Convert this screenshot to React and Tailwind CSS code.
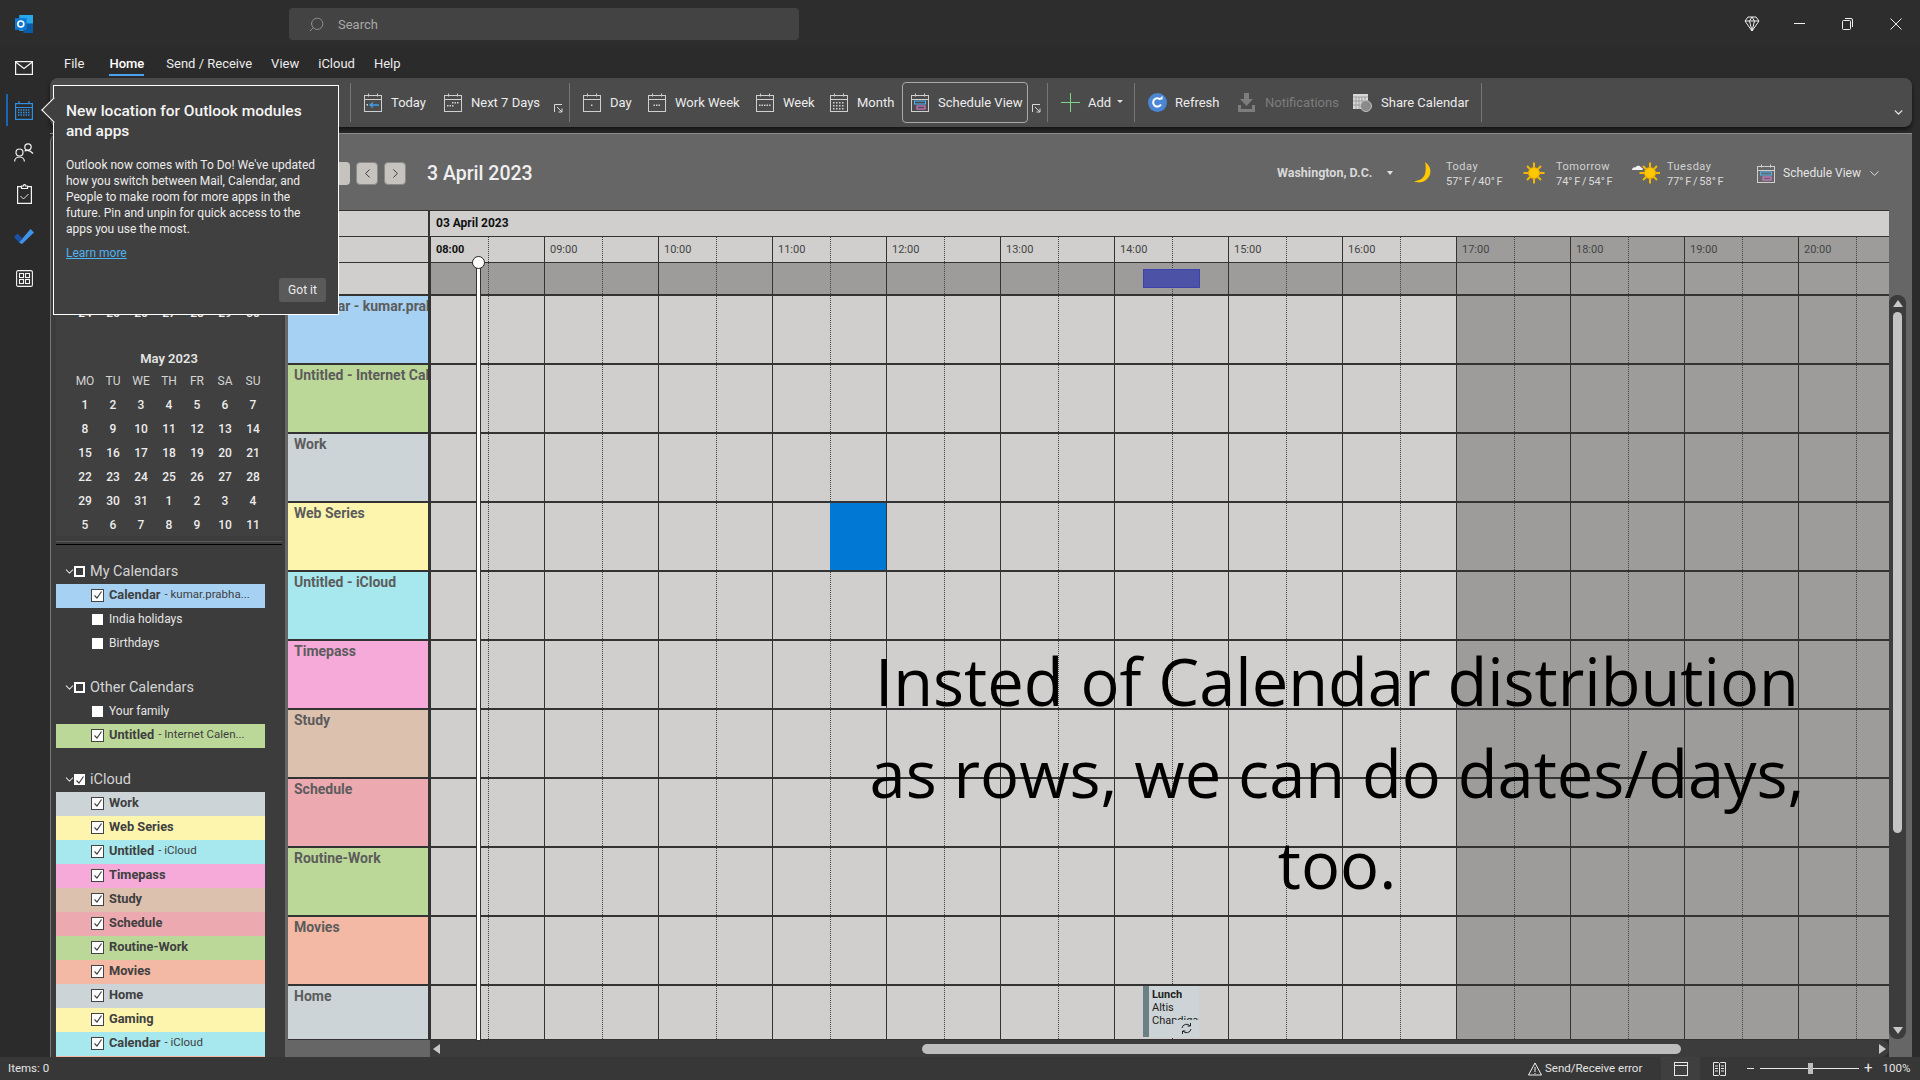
import { ChevronDown, ChevronLeft, ChevronRight, Search } from 'lucide-react';

const HOURS = ['08:00', '09:00', '10:00', '11:00', '12:00', '13:00', '14:00', '15:00', '16:00', '17:00', '18:00', '19:00', '20:00'];

const ROWS = [
  { label: 'Calendar - kumar.prabhakar', color: 'bg-[#a6d1f3]' },
  { label: 'Untitled - Internet Calendar', color: 'bg-[#bcd898]' },
  { label: 'Work', color: 'bg-[#cdd4d7]' },
  { label: 'Web Series', color: 'bg-[#fdf5ae]' },
  { label: 'Untitled - iCloud', color: 'bg-[#a6e8ee]' },
  { label: 'Timepass', color: 'bg-[#f5aad9]' },
  { label: 'Study', color: 'bg-[#dcc1ae]' },
  { label: 'Schedule', color: 'bg-[#eca9b0]' },
  { label: 'Routine-Work', color: 'bg-[#bcd898]' },
  { label: 'Movies', color: 'bg-[#f4b9a5]' },
  { label: 'Home', color: 'bg-[#cdd4d7]' },
];

const ICLOUD = [
  { name: 'Work', color: 'bg-[#cdd4d7]' },
  { name: 'Web Series', color: 'bg-[#fdf5ae]' },
  { name: 'Untitled', sub: 'iCloud', color: 'bg-[#a6e8ee]' },
  { name: 'Timepass', color: 'bg-[#f5aad9]' },
  { name: 'Study', color: 'bg-[#dcc1ae]' },
  { name: 'Schedule', color: 'bg-[#eca9b0]' },
  { name: 'Routine-Work', color: 'bg-[#bcd898]' },
  { name: 'Movies', color: 'bg-[#f4b9a5]' },
  { name: 'Home', color: 'bg-[#cdd4d7]' },
  { name: 'Gaming', color: 'bg-[#fdf5ae]' },
  { name: 'Calendar', sub: 'iCloud', color: 'bg-[#a6e8ee]' },
  { name: 'Tasks', color: 'bg-[#f4b9a5]' },
];

const WEEKDAYS = ['MO', 'TU', 'WE', 'TH', 'FR', 'SA', 'SU'];
const APRIL = [27, 28, 29, 30, 31, 1, 2, 3, 4, 5, 6, 7, 8, 9, 10, 11, 12, 13, 14, 15, 16, 17, 18, 19, 20, 21, 22, 23, 24, 25, 26, 27, 28, 29, 30];
const MAY = [1, 2, 3, 4, 5, 6, 7, 8, 9, 10, 11, 12, 13, 14, 15, 16, 17, 18, 19, 20, 21, 22, 23, 24, 25, 26, 27, 28, 29, 30, 31, 1, 2, 3, 4, 5, 6, 7, 8, 9, 10, 11];

function CalIcon({ children, stroke = '#cfcfcf' }) {
  return (
    <svg width="18" height="19" viewBox="0 0 18 19" fill="none" stroke={stroke} strokeWidth="1" className="shrink-0">
      <rect x="0.5" y="2.5" width="17" height="16" />
      <path d="M0.5 6.5h17M4.5 0.5v3M13.5 0.5v3" />
      {children}
    </svg>
  );
}

function Dots({ cells }) {
  return cells.map(([x, y]) => <rect key={`${x}-${y}`} x={x} y={y} width="1.5" height="1.5" fill="#cfcfcf" stroke="none" />);
}

function Launcher() {
  return (
    <svg width="9" height="9" viewBox="0 0 9 9" fill="none" stroke="#d8d8d8" className="shrink-0 self-end mb-[1px]">
      <path d="M0.5 8V0.5H8M3 3l5 5M8 4.5V8H4.5" />
    </svg>
  );
}

function Separator({ className }) {
  return <div className={`h-[39px] w-px shrink-0 bg-[#777] ${className}`} />;
}

function RibbonItem({ icon, label, className, muted }) {
  return (
    <div className={`flex shrink-0 items-center gap-[9px] whitespace-nowrap text-[13px] ${muted ? 'text-[#7d7d7d]' : 'text-[#ececec]'} ${className}`}>
      {icon}
      <span>{label}</span>
    </div>
  );
}

function ScheduleIcon() {
  return (
    <CalIcon>
      <rect x="3.5" y="8" width="11" height="3" stroke="#4db5f5" />
      <rect x="6" y="13" width="8" height="3" stroke="#e77fe0" />
    </CalIcon>
  );
}

function Ribbon() {
  return (
    <div className="flex h-[49px] items-center rounded-[8px] bg-[#4b4b4b] pl-[300px] pr-[7px] shadow-[0_3px_4px_rgba(0,0,0,0.55)]">
      <Separator />
      <RibbonItem
        className="ml-[13px] w-[62px]"
        label="Today"
        icon={
          <CalIcon>
            <path d="M15 12H6M9 9.5L6 12l3 2.500" stroke="#3f9ee8" strokeWidth="1.300" />
            <rect x="2.500" y="11" width="1.500" height="1.500" fill="#cfcfcf" stroke="none" />
          </CalIcon>
        }
      />
      <RibbonItem
        className="ml-[18px] w-[97px]"
        label="Next 7 Days"
        icon={<CalIcon><Dots cells={[[8, 9], [10.5, 9], [13, 9], [3, 12], [5.5, 12], [8, 12]]} /></CalIcon>}
      />
      <div className="ml-[13px] flex h-[22px] shrink-0"><Launcher /></div>
      <Separator className="ml-[6px]" />
      <RibbonItem className="ml-[13px] w-[49px]" label="Day" icon={<CalIcon><Dots cells={[[8, 11.5]]} /></CalIcon>} />
      <RibbonItem className="ml-[16px] w-[93px]" label="Work Week" icon={<CalIcon><Dots cells={[[5.5, 11.5], [8, 11.5], [10.5, 11.5]]} /></CalIcon>} />
      <RibbonItem className="ml-[15px] w-[59px]" label="Week" icon={<CalIcon><Dots cells={[[3, 11.5], [5.5, 11.5], [8, 11.5], [10.5, 11.5], [13, 11.5]]} /></CalIcon>} />
      <RibbonItem
        className="ml-[15px] w-[65px]"
        label="Month"
        icon={<CalIcon><Dots cells={[[3, 9], [6, 9], [9, 9], [12, 9], [3, 12], [6, 12], [9, 12], [12, 12], [3, 15], [6, 15], [9, 15], [12, 15]]} /></CalIcon>}
      />
      <RibbonItem className="ml-[7px] h-[41px] w-[126px] rounded-[4px] border border-[#a8a8a8] pl-[8px]" label="Schedule View" icon={<ScheduleIcon />} />
      <div className="ml-[4px] flex h-[22px] shrink-0"><Launcher /></div>
      <Separator className="ml-[6px]" />
      <RibbonItem
        className="ml-[13px] w-[57px]"
        label="Add"
        icon={
          <svg width="19" height="19" viewBox="0 0 19 19" stroke="#7fd58c" className="shrink-0 mr-[-1px]">
            <path d="M9.500 0v19M0 9.500h19" />
          </svg>
        }
      />
      <span className="ml-[-1px] mb-[2px] h-0 w-0 shrink-0 border-x-[3px] border-t-[3px] border-x-transparent border-t-[#e0e0e0]" />
      <Separator className="ml-[11px]" />
      <RibbonItem
        className="ml-[13px] w-[71px]"
        label="Refresh"
        icon={
          <svg width="19" height="19" viewBox="0 0 19 19" className="shrink-0 mr-[-1px]">
            <circle cx="9.500" cy="9.500" r="9.500" fill="#4a86d4" />
            <path d="M13 11.500a4.200 4.200 0 1 1-.6-5" fill="none" stroke="#fff" strokeWidth="2" />
            <path d="M10.500 6.500h4V2.800z" fill="#fff" />
          </svg>
        }
      />
      <RibbonItem
        muted
        className="ml-[18px] w-[100px]"
        label="Notifications"
        icon={
          <svg width="19" height="19" viewBox="0 0 19 19" fill="#7d7d7d" className="shrink-0">
            <path d="M7 0h5v6h4l-6.500 7L3 6h4zM1 12h3v4h11v-4h3v7H1z" />
          </svg>
        }
      />
      <RibbonItem
        className="ml-[16px] w-[116px]"
        label="Share Calendar"
        icon={
          <svg width="19" height="19" viewBox="0 0 19 19" className="shrink-0">
            <rect x="0" y="1" width="15" height="15" fill="#d8d8d8" />
            <path d="M0 4h15M3 4v12M6 4v12M9 4v12M12 4v12M0 8h15M0 12h15" stroke="#8a8a8a" strokeWidth="0.700" />
            <circle cx="13" cy="13" r="5.500" fill="#8a8a8a" stroke="#bdbdbd" />
          </svg>
        }
      />
      <Separator className="ml-[12px]" />
      <ChevronDown className="ml-auto mt-[20px] h-[13px] w-[13px] text-[#e8e8e8]" strokeWidth={2.500} />
    </div>
  );
}

function Tooltip() {
  return (
    <div className="absolute left-[53px] top-[85px] h-[230px] w-[286px] border border-white bg-[#404040] pl-[12px] pt-[15px] text-white">
      <div className="absolute left-[-9px] top-[15px] h-[18px] w-[18px] rotate-45 border-b border-l border-white bg-[#404040]" />
      <div className="relative text-[15.500px] font-medium leading-[20px] text-[#f4f4f4]">
        New location for Outlook modules
        <br />
        and apps
      </div>
      <p className="mt-[16px] w-[254px] text-[12px] leading-[16px] text-[#ececec]">
        Outlook now comes with To Do! We've updated how you switch between Mail, Calendar, and People to make room for more apps in the future. Pin and unpin for quick access to the apps you use the most.
      </p>
      <div className="mt-[8px] text-[12px] leading-[16px] text-[#4fb3f0] underline">Learn more</div>
      <div className="absolute bottom-[12px] right-[12px] flex h-[24px] w-[47px] items-center justify-center rounded-[3px] bg-[#5a5a5a] text-[12px] text-[#ececec]">Got it</div>
    </div>
  );
}

function MiniMonth({ title, days }) {
  return (
    <div className="w-[196px] shrink-0 text-[12px] text-[#ececec]">
      <div className="flex h-[20px] items-center justify-center text-[13px] font-semibold text-[#e4e4e4]">{title}</div>
      <div className="grid h-[24px] grid-cols-7 items-center text-center text-[#d4d4d4]">
        {WEEKDAYS.map((day) => <span key={day}>{day}</span>)}
      </div>
      <div className="grid h-[144px] grid-cols-7 content-start text-center font-medium">
        {days.map((day, index) => (
          <span key={index} className="flex h-[24px] items-center justify-center">{day}</span>
        ))}
      </div>
    </div>
  );
}

function CheckMark() {
  return (
    <svg width="10" height="10" viewBox="0 0 10 10" fill="none" stroke="#444" strokeWidth="1.200">
      <path d="M1.500 5.500L4 8l4.500-6.500" />
    </svg>
  );
}

function GroupHeader({ label, checked, className }) {
  return (
    <div className={`flex h-[25px] items-center pl-[7px] ${className}`}>
      <ChevronDown className="h-[13px] w-[13px] text-[#d8d8d8]" strokeWidth={2} />
      {checked ? (
        <span className="ml-[-2px] flex h-[11px] w-[11px] items-center justify-center bg-white">
          <CheckMark />
        </span>
      ) : (
        <span className="ml-[-2px] h-[11px] w-[11px] border-2 border-white" />
      )}
      <span className="ml-[5px] text-[14.500px] text-[#d4d4d4]">{label}</span>
    </div>
  );
}

function CalendarRow({ name, sub, color }) {
  if (!color) {
    return (
      <div className="flex h-[24px] w-[209px] items-center pb-[2px] pl-[36px] text-[12px] text-[#e4e4e4]">
        <span className="h-[11px] w-[11px] shrink-0 bg-white" />
        <span className="ml-[6px]">{name}</span>
      </div>
    );
  }

  return (
    <div className={`flex h-[24px] w-[209px] items-center pb-[2px] pl-[35px] text-[12.800px] text-[#404040] ${color}`}>
      <span className="flex h-[13px] w-[13px] shrink-0 items-center justify-center border border-[#444] bg-white">
        <CheckMark />
      </span>
      <span className="ml-[5px] whitespace-nowrap font-bold">{name}</span>
      {sub && <span className="ml-[4px] whitespace-nowrap text-[11.500px]">- {sub}</span>}
    </div>
  );
}

function Sidebar() {
  return (
    <div className="flex w-[238px] shrink-0 overflow-hidden rounded-tl-[8px] border-l border-[#777] bg-[#3c3c3c]">
      <div className="h-full w-[234px] pl-[5px]">
        <div className="flex h-[402px] w-[226px] flex-col items-center overflow-hidden bg-[#404040] pt-[27px]">
          <MiniMonth title="April 2023" days={APRIL} />
          <MiniMonth title="May 2023" days={MAY} />
        </div>
        <div className="mt-[5px] h-[4px] w-[226px] border-y border-t-[#5a5a5a] border-b-black" />
        <GroupHeader label="My Calendars" className="mt-[14px]" />
        <CalendarRow name="Calendar" sub="kumar.prabha..." color="bg-[#a6d1f3]" />
        <CalendarRow name="India holidays" />
        <CalendarRow name="Birthdays" />
        <GroupHeader label="Other Calendars" className="mt-[19px]" />
        <CalendarRow name="Your family" />
        <CalendarRow name="Untitled" sub="Internet Calen..." color="bg-[#bcd898]" />
        <GroupHeader checked label="iCloud" className="mt-[19px]" />
        {ICLOUD.map((item) => <CalendarRow key={item.name} {...item} />)}
      </div>
      <div className="h-full flex-1 bg-[#666]" />
    </div>
  );
}

function Sun({ cloud }) {
  return (
    <svg width="28" height="24" viewBox="0 0 28 24" className="shrink-0">
      <g transform={cloud ? 'translate(18 12)' : 'translate(14 12)'}>
        <path d="M0-10.500V10.500M-10.500 0H10.500M-7-7L7 7M7-7L-7 7" stroke="#f4b800" strokeWidth="2" />
        <circle r="5.500" fill="#ffc800" stroke="#e8a800" />
      </g>
      {cloud && <path d="M0 9c0-2 2-3 3.500-2.500C4.500 4 8 4 9 6.500c2 0 2.500 2.500 1 2.500z" fill="#f0f0f0" />}
    </svg>
  );
}

function Forecast({ icon, day, temp, className, textClass }) {
  return (
    <div className={`flex shrink-0 items-center ${className}`}>
      {icon}
      <div className={`whitespace-nowrap pt-[1px] text-[11px] leading-[15px] text-[#dcdcdc] [word-spacing:-1px] ${textClass}`}>
        <div className="tracking-[0.5px] text-[#d2d2d2]">{day}</div>
        <div>{temp}</div>
      </div>
    </div>
  );
}

function ViewHeader() {
  return (
    <div className="flex h-[76px] shrink-0 items-center bg-[#666] pt-[2px]">
      <div className="ml-[30px] h-[23px] w-[32px] rounded-[4px] bg-[#c6c2be]" />
      <div className="ml-[6px] flex h-[23px] w-[22px] items-center justify-center rounded-[4px] border border-[#8a8a8a] bg-[#c6c2be]">
        <ChevronLeft className="h-[15px] w-[15px] text-[#333]" strokeWidth={1.500} />
      </div>
      <div className="ml-[6px] flex h-[23px] w-[22px] items-center justify-center rounded-[4px] border border-[#8a8a8a] bg-[#c6c2be]">
        <ChevronRight className="h-[15px] w-[15px] text-[#333]" strokeWidth={1.500} />
      </div>
      <div className="ml-[21px] mt-[1px] w-[106px] shrink-0 whitespace-nowrap text-[19.500px] font-medium text-[#f0f0f0]">3 April 2023</div>
      <div className="ml-[744px] w-[98px] shrink-0 whitespace-nowrap text-[12.500px] font-bold text-[#d8d8d8]">Washington, D.C.</div>
      <span className="ml-[12px] h-0 w-0 shrink-0 border-x-[3px] border-t-[4px] border-x-transparent border-t-[#e0e0e0]" />
      <Forecast
        className="ml-[21px] w-[106px]"
        textClass="ml-[14px]"
        day="Today"
        temp="57° F / 40° F"
        icon={
          <svg width="18" height="22" viewBox="0 0 18 22" className="shrink-0">
            <path d="M11 0c6 4 7 11 3 16-3 4-9 6-14 3 5 0 9-2 11-7 1-4 1-8 0-12z" fill="#ffc800" />
          </svg>
        }
      />
      <Forecast className="w-[112px]" textClass="ml-[8px]" day="Tomorrow" temp="74° F / 54° F" icon={<Sun />} />
      <Forecast className="w-[125px]" textClass="ml-[7px]" day="Tuesday" temp="77° F / 58° F" icon={<Sun cloud />} />
      <div className="flex shrink-0 items-center whitespace-nowrap text-[12px] text-[#e4e4e4]">
        <ScheduleIcon />
        <span className="ml-[8px]">Schedule View</span>
        <ChevronDown className="ml-[6px] h-[15px] w-[15px]" strokeWidth={1.500} />
      </div>
    </div>
  );
}

function HourCell({ index, children }) {
  return (
    <div className={`relative h-full w-[114px] shrink-0 border-l border-[#333] ${index >= 9 ? 'bg-[#9d9c9a]' : 'bg-[#d0cfcd]'}`}>
      <div className="absolute bottom-0 left-[57px] top-0 border-l border-dotted border-[#444]" />
      {children}
    </div>
  );
}

function TimelineRow({ label, color, events = {} }) {
  return (
    <div className="flex h-[69px] shrink-0 border-b-2 border-[#333]">
      <div className={`h-full w-[142px] shrink-0 overflow-hidden whitespace-nowrap border-r-2 border-[#333] pl-[6px] text-[14px] font-bold text-[#5c5c5c] ${color}`}>{label}</div>
      {HOURS.map((hour, index) => <HourCell key={hour} index={index}>{events[index]}</HourCell>)}
    </div>
  );
}

function LunchEvent() {
  return (
    <div className="absolute left-[28px] top-0 flex h-[51px] w-[56px] bg-[#cdd4d7] text-[11px] leading-[13px] text-[#222]">
      <div className="h-full w-[6px] shrink-0 bg-[#6b8085]" />
      <div className="relative flex-1 overflow-hidden whitespace-nowrap pl-[3px] pt-[2px]">
        <div className="font-bold">Lunch</div>
        <div>Altis</div>
        <div>Chandigarh</div>
        <div className="absolute bottom-0 right-0 flex h-[17px] w-[24px] items-end justify-start bg-[#cdd4d7] pb-[2px] pl-[5px]">
          <svg width="13" height="13" viewBox="0 0 13 13" fill="none" stroke="#222">
            <path d="M2 6a4.500 4.500 0 0 1 8-2M11 7a4.500 4.500 0 0 1-8 2M10.500 1v3h-3M2.500 12V9h3" />
          </svg>
        </div>
      </div>
    </div>
  );
}

function Timeline() {
  return (
    <div className="relative flex min-w-0 flex-1 flex-col overflow-hidden">
      <div className="flex h-[27px] shrink-0 border-y border-[#333] bg-[#d0cfcd]">
        <div className="h-full w-[142px] shrink-0 border-r-2 border-[#333]" />
        <div className="flex items-center pb-[1px] pl-[6px] text-[12px] font-bold text-[#111]">03 April 2023</div>
      </div>
      <div className="flex h-[26px] shrink-0 border-b border-[#333] bg-[#d0cfcd]">
        <div className="h-full w-[142px] shrink-0 border-r-2 border-[#333]" />
        {HOURS.map((hour, index) => (
          <HourCell key={hour} index={index}>
            <span className={`absolute left-[5px] top-[5px] text-[11px] leading-[16px] ${index === 0 ? 'font-bold text-[#111]' : 'text-[#444]'}`}>{hour}</span>
          </HourCell>
        ))}
      </div>
      <div className="flex h-[33px] shrink-0 border-b-2 border-[#333] bg-[#d0cfcd]">
        <div className="h-full w-[142px] shrink-0 border-r-2 border-[#333]" />
        {HOURS.map((hour, index) => (
          <div key={hour} className="relative h-full w-[114px] shrink-0 border-l border-[#333] bg-[#9d9c9a]">
            <div className="absolute bottom-0 left-[57px] top-0 border-l border-dotted border-[#444]" />
            {index === 6 && <div className="absolute left-[28px] top-[6px] h-[19px] w-[57px] border border-[#3c42a8] bg-[#4c52a6]" />}
          </div>
        ))}
      </div>
      <div className="min-h-0 flex-1 overflow-hidden border-b border-[#333]">
        {ROWS.map((row) => (
          <TimelineRow
            key={row.label}
            {...row}
            events={
              row.label === 'Web Series'
                ? { 3: <div className="absolute bottom-0 left-[57px] top-0 w-[57px] bg-[#0078d4]" /> }
                : row.label === 'Home'
                  ? { 6: <LunchEvent /> }
                  : {}
            }
          />
        ))}
      </div>
      <div className="flex h-[17px] shrink-0">
        <div className="h-full w-[142px] shrink-0 bg-[#666]" />
        <div className="relative flex h-full flex-1 items-center rounded-r-[8px] bg-[#3c3c3c]">
          <span className="absolute left-[3px] h-0 w-0 border-y-[5px] border-r-[7px] border-y-transparent border-r-[#c8c8c8]" />
          <div className="ml-[492px] h-[10px] w-[759px] rounded-full bg-[#bdbdbd]" />
          <span className="absolute right-[3px] h-0 w-0 border-y-[5px] border-l-[7px] border-y-transparent border-l-[#c8c8c8]" />
        </div>
      </div>

      {/* current time marker */}
      <div className="absolute bottom-[17px] left-[189px] top-[52px] w-[3px] bg-white shadow-[0_0_0_1px_#333]" />
      <div className="absolute left-[184px] top-[46px] h-[13px] w-[13px] rounded-full border border-[#222] bg-white" />

      {/* handwritten note pasted over the grid */}
      <div className="absolute left-[479px] top-[426px] w-[1140px] whitespace-nowrap text-center font-['Open_Sans',sans-serif] text-[65px] font-medium leading-[91.500px] text-black">
        Insted of Calendar distribution
        <br />
        as rows, we can do dates/days,
        <br />
        too.
      </div>
    </div>
  );
}

function VerticalScroll() {
  return (
    <div className="w-[23px] shrink-0 bg-[#666] pt-[85px]">
      <div className="flex h-[744px] w-[17px] flex-col items-center rounded-b-[8px] rounded-t-[8px] bg-[#3c3c3c]">
        <span className="mt-[5px] h-0 w-0 border-x-[5px] border-b-[7px] border-x-transparent border-b-[#c8c8c8]" />
        <div className="mt-[5px] h-[521px] w-[9px] rounded-full bg-[#c4c4c4]" />
        <span className="mb-[5px] mt-auto h-0 w-0 border-x-[5px] border-t-[7px] border-x-transparent border-t-[#c8c8c8]" />
      </div>
    </div>
  );
}

function RailIcon({ children }) {
  return <div className="flex h-[42px] w-full items-center justify-center">{children}</div>;
}

function Rail() {
  return (
    <div className="flex w-[50px] shrink-0 flex-col bg-[#2b2b2b] pr-[2px]">
      <RailIcon>
        <svg width="18" height="14" viewBox="0 0 18 14" fill="none" stroke="#f4f4f4" strokeWidth="1.200">
          <rect x="0.600" y="0.600" width="16.800" height="12.800" />
          <path d="M0.600 1l8.400 6.500L17.400 1" />
        </svg>
      </RailIcon>
      <div className="relative flex h-[42px] w-full items-center justify-center">
        <div className="absolute bottom-[5px] left-[6px] top-[5px] w-[2px] bg-[#1468b8]" />
        <svg width="18" height="19" viewBox="0 0 18 19" fill="none" stroke="#2f8fe0" strokeWidth="1.200">
          <rect x="0.600" y="2.600" width="16.800" height="15.800" />
          <path d="M0.600 6.500h16.800M4 0v3M14 0v3" />
          <path d="M3 9h12M3 11.500h12M3 14h12" strokeWidth="1.500" strokeDasharray="1.500 1" />
        </svg>
      </div>
      <RailIcon>
        <svg width="20" height="19" viewBox="0 0 20 19" fill="none" stroke="#f4f4f4" strokeWidth="1.200">
          <circle cx="5.500" cy="9.500" r="3.500" />
          <path d="M0.600 18.500c0-6 9.800-6 9.800 0" />
          <circle cx="14" cy="4" r="3.200" />
          <path d="M10.500 8c2-.8 5.500-.8 8.500 2.500" />
        </svg>
      </RailIcon>
      <RailIcon>
        <svg width="15" height="20" viewBox="0 0 15 20" fill="none" stroke="#f4f4f4" strokeWidth="1.200">
          <path d="M4.500 2.600H0.600v16.800h13.800V2.600H10.500" />
          <path d="M4.500 4.500V2h2c0-2 2-2 2 0h2v2.500z" />
          <path d="M3.500 12l3 3 5-5" strokeWidth="0.900" />
        </svg>
      </RailIcon>
      <RailIcon>
        <svg width="20" height="16" viewBox="0 0 20 16">
          <path d="M0 9l3.500-3.500L8 10l-3 4.500z" fill="#1c4fa8" />
          <path d="M5 14.500L16.500 1 20 4.500 8 16z" fill="#3f93e8" />
        </svg>
      </RailIcon>
      <RailIcon>
        <svg width="17" height="17" viewBox="0 0 17 17" fill="none" stroke="#f4f4f4" strokeWidth="1.100">
          <rect x="0.600" y="0.600" width="15.800" height="15.800" rx="1.500" />
          <rect x="3.500" y="3.500" width="4" height="4" />
          <rect x="9.500" y="3.500" width="4" height="4" />
          <rect x="3.500" y="9.500" width="4" height="4" />
          <rect x="9.500" y="9.500" width="4" height="4" />
        </svg>
      </RailIcon>
    </div>
  );
}

function TitleBar() {
  return (
    <div className="flex h-[47px] shrink-0 items-center bg-[#2d2d2d]">
      <svg width="18" height="18" viewBox="0 0 17 17" className="ml-[15px] shrink-0">
        <rect x="4" y="0" width="13" height="15" fill="#28a8ea" />
        <rect x="8" y="8" width="9" height="9" fill="#0a5ca8" />
        <rect x="0" y="3" width="11" height="11" fill="#0f78d4" />
        <circle cx="5.500" cy="8.500" r="2.800" fill="none" stroke="#fff" strokeWidth="1.500" />
      </svg>
      <div className="ml-[256px] mt-[1px] flex h-[32px] w-[510px] items-center rounded-[4px] bg-[#434343] pl-[19px] pt-[2px] text-[13px] text-[#a8a8a8]">
        <Search className="mb-[2px] h-[17px] w-[17px] -scale-x-100 text-[#9a9a9a]" strokeWidth={1.200} />
        <span className="ml-[13px]">Search</span>
      </div>
      <svg width="16" height="16" viewBox="0 0 16 16" fill="none" stroke="#f0f0f0" className="ml-[945px] shrink-0">
        <path d="M4 1h8l3 4-7 10L1 5zM1 5h14M5.500 5L8 15l2.500-10M5.500 5L8 1l2.500 4" />
      </svg>
      <div className="ml-[34px] h-px w-[11px] bg-[#f0f0f0]" />
      <svg width="11" height="12" viewBox="0 0 11 12" fill="none" stroke="#f0f0f0" className="ml-[37px] shrink-0">
        <rect x="0.500" y="2.500" width="8" height="9" rx="1" />
        <path d="M3 0.500h6a1.500 1.500 0 0 1 1.500 1.500v7" />
      </svg>
      <svg width="12" height="12" viewBox="0 0 12 12" stroke="#f0f0f0" className="ml-[37px] shrink-0">
        <path d="M0.500 0.500l11 11M11.500 0.500l-11 11" />
      </svg>
    </div>
  );
}

function StatusBar() {
  return (
    <div className="flex h-[23px] shrink-0 items-center bg-[#373737] text-[11.500px] text-[#e4e4e4]">
      <span className="ml-[8px] w-[42px] whitespace-nowrap">Items: 0</span>
      <svg width="14" height="14" viewBox="0 0 14 14" fill="none" stroke="#f0f0f0" className="ml-[1478px] shrink-0">
        <path d="M7 1l6.500 12H0.500zM7 5v5M7 11v1" />
      </svg>
      <span className="ml-[3px] w-[96px] whitespace-nowrap">Send/Receive error</span>
      <div className="ml-[20px] flex h-full w-[39px] items-center justify-center bg-[#3f3f3f]">
        <svg width="14" height="14" viewBox="0 0 14 14" fill="none" stroke="#e8e8e8">
          <rect x="0.500" y="0.500" width="13" height="13" />
          <path d="M0.500 3.500h13" />
        </svg>
      </div>
      <svg width="13" height="14" viewBox="0 0 13 14" fill="none" stroke="#e8e8e8" className="ml-[13px] shrink-0">
        <path d="M0.500 0.500h5l1 1 1-1h5v13h-5l-1-1-1 1h-5zM6.500 1.500v11M2 4h3M2 6.500h3M2 9h3M8 4h3M8 6.500h3M8 9h3" />
      </svg>
      <div className="ml-[21px] h-px w-[7px] bg-[#e8e8e8]" />
      <div className="relative ml-[6px] h-px w-[99px] bg-[#e8e8e8]">
        <div className="absolute left-[48px] top-[-5px] h-[11px] w-[5px] bg-[#bdbdbd]" />
      </div>
      <span className="ml-[5px] text-[15px] leading-none">+</span>
      <span className="ml-[10px] whitespace-nowrap">100%</span>
    </div>
  );
}

export default function App() {
  const menus = ['File', 'Home', 'Send / Receive', 'View', 'iCloud', 'Help'];

  return (
    <div className="relative flex h-[1080px] w-[1920px] flex-col overflow-hidden bg-[#2b2b2b] font-['Roboto',sans-serif]">
      <TitleBar />
      <div className="flex min-h-0 flex-1">
        <Rail />
        <div className="flex min-w-0 flex-1 flex-col pr-[8px]">
          <div className="flex h-[31px] shrink-0 items-center pl-[14px] pt-[2px] text-[13px] text-[#ececec]">
            {menus.map((menu) => (
              <span
                key={menu}
                className={
                  menu === 'Home'
                    ? 'relative ml-[27px] mr-[22px] font-medium text-white after:absolute after:inset-x-0 after:-bottom-[3px] after:h-[2px] after:bg-[#4ba3ee]'
                    : menu === 'File'
                      ? 'mr-[-2px]'
                      : 'mr-[19px]'
                }
              >
                {menu}
              </span>
            ))}
          </div>
          <Ribbon />
          <div className="mt-[6px] flex min-h-0 flex-1 border-t border-[#8a8a8a]">
            <Sidebar />
            <div className="flex min-w-0 flex-1 flex-col">
              <ViewHeader />
              <div className="flex min-h-0 flex-1">
                <Timeline />
                <VerticalScroll />
              </div>
            </div>
          </div>
        </div>
      </div>
      <StatusBar />
      <Tooltip />
    </div>
  );
}
